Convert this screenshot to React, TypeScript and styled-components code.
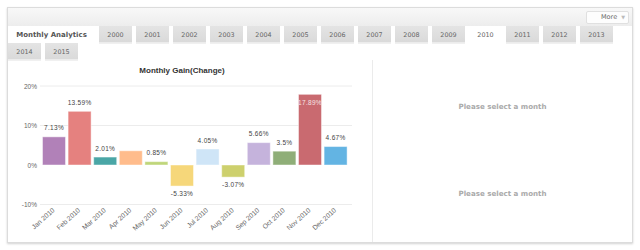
import React from "react";
import styled, { createGlobalStyle } from "styled-components";

const GlobalStyle = createGlobalStyle`
  html, body {
    margin: 0;
    padding: 0;
    background: #ffffff;
  }
`;

interface MonthGain {
  label: string;
  value: number;
  color: string;
}

const gains: MonthGain[] = [
  { label: "Jan 2010", value: 7.13, color: "#b181b8" },
  { label: "Feb 2010", value: 13.59, color: "#e5817f" },
  { label: "Mar 2010", value: 2.01, color: "#4aa6a6" },
  { label: "Apr 2010", value: 3.6, color: "#ffbc8c" },
  { label: "May 2010", value: 0.85, color: "#bfd67a" },
  { label: "Jun 2010", value: -5.33, color: "#f6d77a" },
  { label: "Jul 2010", value: 4.05, color: "#cfe5f7" },
  { label: "Aug 2010", value: -3.07, color: "#cdd06d" },
  { label: "Sep 2010", value: 5.66, color: "#c5b3dc" },
  { label: "Oct 2010", value: 3.5, color: "#8fae78" },
  { label: "Nov 2010", value: 17.89, color: "#c96a70" },
  { label: "Dec 2010", value: 4.67, color: "#63b4e3" },
];

// values that have no text label above the bar
const hiddenLabels = ["Apr 2010"];

const years = [
  "2000", "2001", "2002", "2003", "2004", "2005", "2006", "2007",
  "2008", "2009", "2010", "2011", "2012", "2013", "2014", "2015",
];

// chart geometry (svg coordinates)
const ZERO_Y = 105;
const PX_PER_PCT = 3.95;
const FIRST_BAR_X = 34.5;
const SLOT = 25.6;
const BAR_W = 23;

function GainChart() {
  const ticks = [20, 10, 0, -10];
  return (
    <svg width="364" height="182" viewBox="0 0 364 182">
      <text
        x="174"
        y="13"
        textAnchor="middle"
        fontFamily="'Liberation Sans', Arial, sans-serif"
        fontWeight="bold"
        fontSize="8"
        fill="#333"
      >
        Monthly Gain(Change)
      </text>
      {ticks.map((t) => {
        const y = ZERO_Y - t * PX_PER_PCT;
        return (
          <g key={t}>
            {t !== 0 && (
              <line x1="32" x2="344" y1={y} y2={y} stroke="#ececec" strokeWidth="1" />
            )}
            <text
              x="29"
              y={y + 2.5}
              textAnchor="end"
              fontFamily="'Liberation Sans', Arial, sans-serif"
              fontSize="6.5"
              fill="#666"
            >
              {t}%
            </text>
          </g>
        );
      })}
      {gains.map((g, i) => {
        const x = FIRST_BAR_X + i * SLOT;
        const h = Math.abs(g.value) * PX_PER_PCT;
        const top = g.value >= 0 ? ZERO_Y - h : ZERO_Y;
        const cx = x + BAR_W / 2;
        let labelY = g.value >= 0 ? top - 6.5 : ZERO_Y + h + 9.5;
        let labelFill = "#444";
        if (g.value > 16) {
          labelY = top + 10.5;
          labelFill = "#f6e4e4";
        }
        return (
          <g key={g.label}>
            <rect
              x={x}
              y={top}
              width={BAR_W}
              height={h}
              fill={g.color}
              stroke="#ffffff"
              strokeOpacity="0.45"
              strokeWidth="1"
            />
            {!hiddenLabels.includes(g.label) && (
              <text
                x={cx}
                y={labelY}
                textAnchor="middle"
                fontFamily="'Liberation Sans', Arial, sans-serif"
                fontSize="6.5"
                letterSpacing="0.3"
                fill={labelFill}
              >
                {g.value}%
              </text>
            )}
            <text
              x={cx + 1}
              y={151}
              textAnchor="end"
              transform={`rotate(-42 ${cx + 1} 151)`}
              fontFamily="'Liberation Sans', Arial, sans-serif"
              fontSize="6.8"
              fill="#666"
            >
              {g.label}
            </text>
          </g>
        );
      })}
    </svg>
  );
}

function App() {
  return (
    <>
      <GlobalStyle />
      <Page>
        <Panel>
          <Header>
            <MoreButton>
              More <Caret>▼</Caret>
            </MoreButton>
          </Header>
          <TabBar>
            <Tab $active $wide>
              Monthly Analytics
            </Tab>
            {years.map((y) => (
              <Tab key={y} $active={y === "2010"}>
                {y}
              </Tab>
            ))}
          </TabBar>
          <Content>
            <ChartPane>
              <GainChart />
            </ChartPane>
            <DetailPane>
              <Hint>Please select a month</Hint>
              <Hint>Please select a month</Hint>
            </DetailPane>
          </Content>
        </Panel>
      </Page>
    </>
  );
}

export default App;

// 바깥 틀
const Page = styled.div`
  width: 640px;
  height: 250px;
  padding: 7px 0 0 7px;
  box-sizing: border-box;
`;

const Panel = styled.div`
  width: 626px;
  height: 236px;
  box-sizing: border-box;
  border: 1px solid #dcdcdc;
  background: #fff;
  box-shadow: 0 1px 2px rgba(0, 0, 0, 0.18);
  display: flex;
  flex-direction: column;
  overflow: hidden;
`;

// 상단 바
const Header = styled.div`
  height: 18px;
  flex-shrink: 0;
  display: flex;
  justify-content: flex-end;
  align-items: center;
  padding-right: 3px;
  background: linear-gradient(#f8f8f8, #ededed);
`;

const MoreButton = styled.div`
  width: 43px;
  height: 13px;
  box-sizing: border-box;
  border: 1px solid #e0e0e0;
  border-radius: 2px;
  background: #fdfdfd;
  display: flex;
  align-items: center;
  justify-content: flex-end;
  gap: 4px;
  padding-right: 3px;
  font-family: "DejaVu Sans", Verdana, sans-serif;
  font-size: 6.5px;
  color: #666;
`;

const Caret = styled.span`
  font-size: 5px;
  color: #bbb;
`;

// 탭 부분
const TabBar = styled.div`
  display: flex;
  flex-wrap: wrap;
  flex-shrink: 0;
`;

const Tab = styled.div<{ $active?: boolean; $wide?: boolean }>`
  width: ${(p) => (p.$wide ? "87px" : "33px")};
  height: 17px;
  margin-right: 4px;
  box-sizing: border-box;
  display: flex;
  align-items: center;
  justify-content: center;
  font-family: "DejaVu Sans", Verdana, sans-serif;
  font-size: ${(p) => (p.$wide ? "7px" : "6.4px")};
  font-weight: ${(p) => (p.$wide ? "bold" : "normal")};
  color: ${(p) => (p.$wide ? "#555" : "#666")};
  background: ${(p) =>
    p.$active ? "#ffffff" : "linear-gradient(#e4e4e4, #d9d9d9)"};
  box-shadow: ${(p) =>
    p.$active ? "none" : "inset 0 -1px 0 #ececec, 0 1px 0 #f0f0f0"};
`;

// 차트 + 상세 부분
const Content = styled.div`
  flex: 1;
  display: flex;
`;

const ChartPane = styled.div`
  width: 364px;
  border-right: 1px solid #ebebeb;
`;

const DetailPane = styled.div`
  flex: 1;
  display: flex;
  flex-direction: column;
  align-items: center;
  padding-top: 42px;
  gap: 78px;
`;

const Hint = styled.div`
  font-family: "DejaVu Sans", Verdana, sans-serif;
  font-size: 7.1px;
  font-weight: bold;
  color: #aaa;
`;
